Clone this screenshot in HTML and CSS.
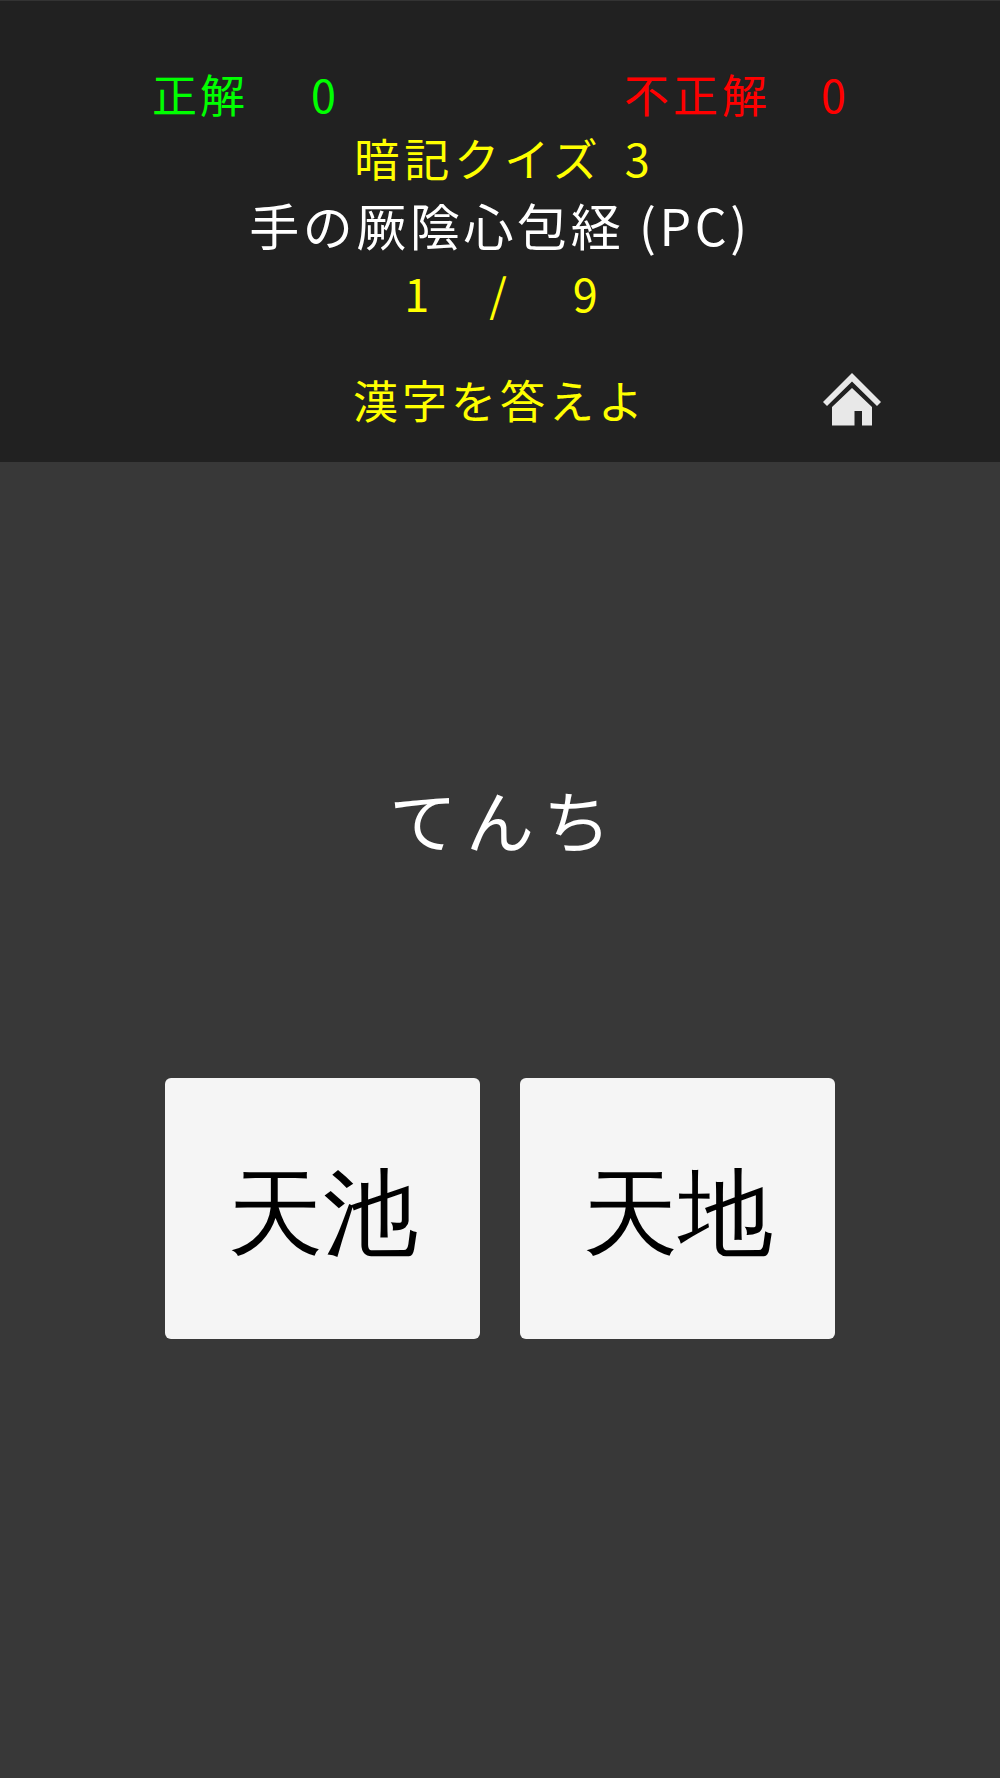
FILE: index.html
```html
<!DOCTYPE html>
<html lang="ja">
<head>
    <meta charset="UTF-8">
    <title>暗記クイズ</title>
    <link rel="stylesheet" href="styles.css">
</head>
<body>
<header class="header">
    <div class="score">
        <div class="score-item correct"><span>正解</span><span>0</span></div>
        <div class="score-item wrong"><span>不正解</span><span>0</span></div>
    </div>
    <div class="quiz-name">暗記クイズ 3</div>
    <div class="quiz-title">手の厥陰心包経 (PC)</div>
    <div class="progress"><span>1</span><span class="slash">/</span><span>9</span></div>
    <div class="prompt-row">
        <div class="prompt">漢字を答えよ</div>
        <a class="home" href="#" aria-label="home">
            <svg width="58" height="53" viewBox="0 0 58 53">
                <path d="M0 29 L29 0 L58 29 L54 33 L29 8.5 L4 33 Z" fill="#e8e8e8"/>
                <path d="M29 15 L49 34 L49 52.5 L39 52.5 L39 38 L31.5 38 L31.5 52.5 L9 52.5 L9 34 Z" fill="#e8e8e8"/>
            </svg>
        </a>
    </div>
</header>
<main class="main">
    <div class="question">てんち</div>
    <div class="choices">
        <button class="choice">天池</button>
        <button class="choice">天地</button>
    </div>
</main>
</body>
</html>
```

FILE: styles.css
```css
* {
    box-sizing: border-box;
}

html,
body {
    margin: 0;
    height: 100%;
}

body {
    display: flex;
    flex-direction: column;
    background-color: #383838;
    font-family: "Noto Sans CJK JP", sans-serif;
    font-weight: 400;
    color: #fff;
}

.header {
    height: 462px;
    padding-top: 61px;
    background-color: #212121;
    border-top: 1px solid #333;
    text-align: center;
}

.score {
    display: flex;
    justify-content: space-between;
    height: 64px;
    padding: 0 150px 0 152px;
    font-size: 45px;
    line-height: 64px;
}

.score-item {
    display: flex;
}

.correct {
    gap: 63px;
    letter-spacing: 3px;
    color: #00ff00;
}

.wrong {
    gap: 50px;
    letter-spacing: 4px;
    color: #ff0000;
}

.quiz-name {
    height: 64px;
    padding-left: 9px;
    font-size: 45px;
    line-height: 64px;
    letter-spacing: 5px;
    word-spacing: 7px;
    color: #ffff00;
}

.quiz-title {
    height: 68px;
    font-size: 50px;
    line-height: 68px;
    letter-spacing: 3.6px;
}

.progress {
    display: flex;
    justify-content: center;
    gap: 60px;
    height: 70px;
    padding-left: 2px;
    font-size: 45px;
    line-height: 70px;
    color: #ffff00;
}

.slash {
    margin-right: 6px;
}

.prompt-row {
    display: grid;
    grid-template-columns: 1fr auto 1fr;
    align-items: center;
    height: 90px;
    margin-top: 26px;
}

.prompt {
    grid-column: 2;
    font-size: 45px;
    letter-spacing: 4px;
    color: #ffff00;
}

.home {
    justify-self: end;
    display: flex;
    margin-right: 119px;
}

.main {
    flex: 1;
    display: flex;
    flex-direction: column;
    align-items: center;
}

.question {
    margin-top: 307px;
    padding-left: 9px;
    font-size: 68px;
    line-height: 100px;
    letter-spacing: 9px;
}

.choices {
    display: flex;
    gap: 40px;
    margin-top: 209px;
}

.choice {
    width: 315px;
    height: 261px;
    padding: 12px 0 0;
    border: none;
    border-radius: 6px;
    background-color: #f5f5f5;
    font-family: serif;
    font-size: 95px;
    font-weight: 400;
    color: #000;
}
```
